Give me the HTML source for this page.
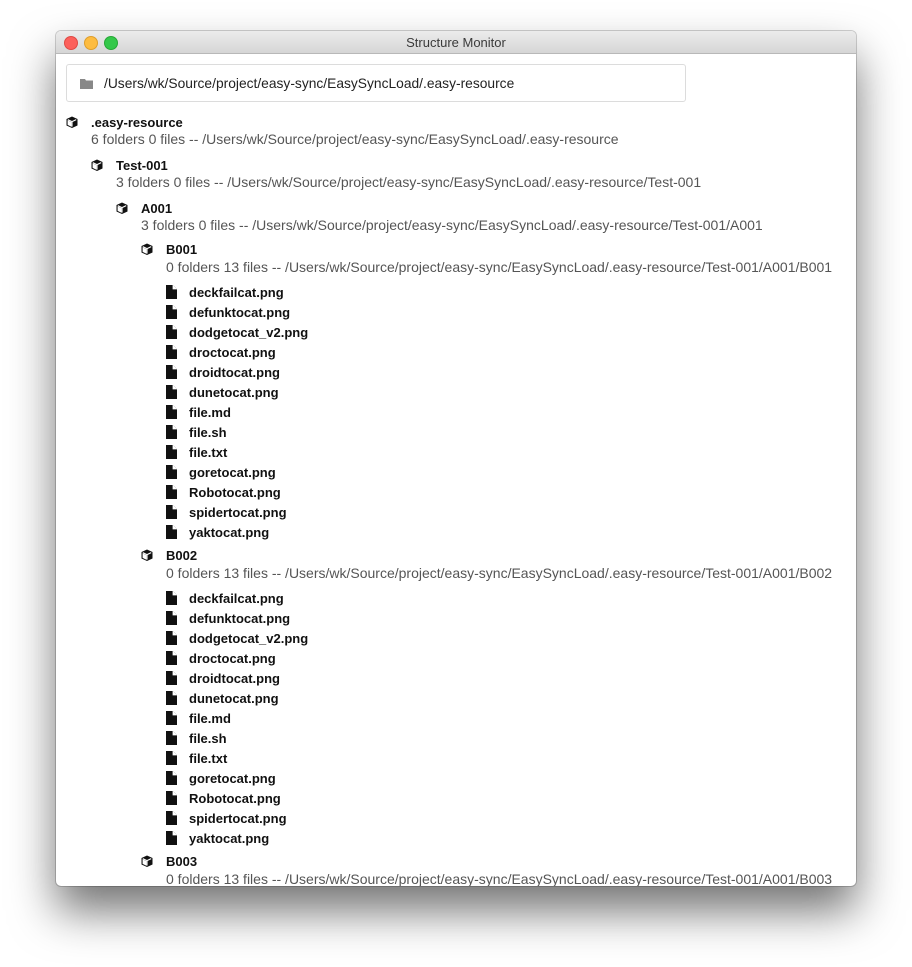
<!DOCTYPE html>
<html><head><meta charset="utf-8"><style>
body{margin:0;width:912px;height:967px;background:#fff;position:relative;overflow:hidden;font-family:"Liberation Sans",sans-serif;}
.win{position:absolute;left:56px;top:31px;width:800px;height:855px;background:#fff;border-radius:5px;box-shadow:0 25px 45px rgba(0,0,0,.55),0 0 0 1px rgba(0,0,0,.18);overflow:hidden}
.tb{height:22px;background:linear-gradient(#ececec,#d6d6d6);border-bottom:1px solid #b8b8b8;text-align:center;font-size:13px;line-height:24px;color:#3a3a3a}
.d{position:absolute;top:5px;width:12px;height:12px;border-radius:50%}
.inp{position:absolute;left:10px;top:33px;width:618px;height:36px;border:1px solid #dcdcdc;border-radius:3px}
.inp span{position:absolute;left:37px;top:11px;font-size:13.8px;color:#222}
.r{position:absolute;white-space:nowrap;font-size:13px;line-height:16px}
div.r{margin-top:1px}
.h{font-weight:bold;color:#111}
.s{color:#555;font-size:14px}
.f{font-weight:bold;color:#111}
</style></head><body>
<div class="win">
<div class="tb">Structure Monitor</div>
<div class="d" style="left:8px;background:#fc605b;border:0.5px solid #de4a44"></div>
<div class="d" style="left:28px;background:#fdbc40;border:0.5px solid #de9e2b"></div>
<div class="d" style="left:48px;background:#34c84a;border:0.5px solid #27a736"></div>
<div class="inp"><svg style="position:absolute;left:13px;top:13px" width="13" height="11" viewBox="0 0 13 11"><path d="M0 1h5l1 1.5h7V11H0z" fill="#888"/></svg><span>/Users/wk/Source/project/easy-sync/EasySyncLoad/.easy-resource</span></div>
</div>
<svg width="0" height="0" style="position:absolute"><defs>
<g id="cube"><path d="M6 0.5L11.5 3v6.5L6 12 0.5 9.5V3z" fill="#111"/><path d="M1.8 3.6L6 5.6l4.2-2M6 5.6v5" stroke="#fff" stroke-width="1.1" fill="none"/><path d="M1.6 4.3L5.4 6.1v4.6L1.6 8.9z" fill="#fff"/></g>
<g id="file"><path d="M0 0h7l4 4v10H0z" fill="#111"/><path d="M7 0v4h4" fill="#fff" stroke="#fff" stroke-width="0.8"/></g>
</defs></svg>

<svg class="r" style="left:66px;top:116px" width="12" height="12"><use href="#cube"/></svg>
<div class="r h" style="left:91px;top:114px">.easy-resource</div>
<div class="r s" style="left:91px;top:130px">6 folders 0 files -- /Users/wk/Source/project/easy-sync/EasySyncLoad/.easy-resource</div>

<svg class="r" style="left:91px;top:159px" width="12" height="12"><use href="#cube"/></svg>
<div class="r h" style="left:116px;top:157px">Test-001</div>
<div class="r s" style="left:116px;top:173px">3 folders 0 files -- /Users/wk/Source/project/easy-sync/EasySyncLoad/.easy-resource/Test-001</div>

<svg class="r" style="left:116px;top:202px" width="12" height="12"><use href="#cube"/></svg>
<div class="r h" style="left:141px;top:200px">A001</div>
<div class="r s" style="left:141px;top:216px">3 folders 0 files -- /Users/wk/Source/project/easy-sync/EasySyncLoad/.easy-resource/Test-001/A001</div>

<svg class="r" style="left:141px;top:243px" width="12" height="12"><use href="#cube"/></svg>
<div class="r h" style="left:166px;top:241px">B001</div>
<div class="r s" style="left:166px;top:258px">0 folders 13 files -- /Users/wk/Source/project/easy-sync/EasySyncLoad/.easy-resource/Test-001/A001/B001</div>

<svg class="r" style="left:166px;top:285px" width="11" height="14"><use href="#file"/></svg><div class="r f" style="left:189px;top:284px">deckfailcat.png</div>
<svg class="r" style="left:166px;top:305px" width="11" height="14"><use href="#file"/></svg><div class="r f" style="left:189px;top:304px">defunktocat.png</div>
<svg class="r" style="left:166px;top:325px" width="11" height="14"><use href="#file"/></svg><div class="r f" style="left:189px;top:324px">dodgetocat_v2.png</div>
<svg class="r" style="left:166px;top:345px" width="11" height="14"><use href="#file"/></svg><div class="r f" style="left:189px;top:344px">droctocat.png</div>
<svg class="r" style="left:166px;top:365px" width="11" height="14"><use href="#file"/></svg><div class="r f" style="left:189px;top:364px">droidtocat.png</div>
<svg class="r" style="left:166px;top:385px" width="11" height="14"><use href="#file"/></svg><div class="r f" style="left:189px;top:384px">dunetocat.png</div>
<svg class="r" style="left:166px;top:405px" width="11" height="14"><use href="#file"/></svg><div class="r f" style="left:189px;top:404px">file.md</div>
<svg class="r" style="left:166px;top:425px" width="11" height="14"><use href="#file"/></svg><div class="r f" style="left:189px;top:424px">file.sh</div>
<svg class="r" style="left:166px;top:445px" width="11" height="14"><use href="#file"/></svg><div class="r f" style="left:189px;top:444px">file.txt</div>
<svg class="r" style="left:166px;top:465px" width="11" height="14"><use href="#file"/></svg><div class="r f" style="left:189px;top:464px">goretocat.png</div>
<svg class="r" style="left:166px;top:485px" width="11" height="14"><use href="#file"/></svg><div class="r f" style="left:189px;top:484px">Robotocat.png</div>
<svg class="r" style="left:166px;top:505px" width="11" height="14"><use href="#file"/></svg><div class="r f" style="left:189px;top:504px">spidertocat.png</div>
<svg class="r" style="left:166px;top:525px" width="11" height="14"><use href="#file"/></svg><div class="r f" style="left:189px;top:524px">yaktocat.png</div>

<svg class="r" style="left:141px;top:549px" width="12" height="12"><use href="#cube"/></svg>
<div class="r h" style="left:166px;top:547px">B002</div>
<div class="r s" style="left:166px;top:564px">0 folders 13 files -- /Users/wk/Source/project/easy-sync/EasySyncLoad/.easy-resource/Test-001/A001/B002</div>

<svg class="r" style="left:166px;top:591px" width="11" height="14"><use href="#file"/></svg><div class="r f" style="left:189px;top:590px">deckfailcat.png</div>
<svg class="r" style="left:166px;top:611px" width="11" height="14"><use href="#file"/></svg><div class="r f" style="left:189px;top:610px">defunktocat.png</div>
<svg class="r" style="left:166px;top:631px" width="11" height="14"><use href="#file"/></svg><div class="r f" style="left:189px;top:630px">dodgetocat_v2.png</div>
<svg class="r" style="left:166px;top:651px" width="11" height="14"><use href="#file"/></svg><div class="r f" style="left:189px;top:650px">droctocat.png</div>
<svg class="r" style="left:166px;top:671px" width="11" height="14"><use href="#file"/></svg><div class="r f" style="left:189px;top:670px">droidtocat.png</div>
<svg class="r" style="left:166px;top:691px" width="11" height="14"><use href="#file"/></svg><div class="r f" style="left:189px;top:690px">dunetocat.png</div>
<svg class="r" style="left:166px;top:711px" width="11" height="14"><use href="#file"/></svg><div class="r f" style="left:189px;top:710px">file.md</div>
<svg class="r" style="left:166px;top:731px" width="11" height="14"><use href="#file"/></svg><div class="r f" style="left:189px;top:730px">file.sh</div>
<svg class="r" style="left:166px;top:751px" width="11" height="14"><use href="#file"/></svg><div class="r f" style="left:189px;top:750px">file.txt</div>
<svg class="r" style="left:166px;top:771px" width="11" height="14"><use href="#file"/></svg><div class="r f" style="left:189px;top:770px">goretocat.png</div>
<svg class="r" style="left:166px;top:791px" width="11" height="14"><use href="#file"/></svg><div class="r f" style="left:189px;top:790px">Robotocat.png</div>
<svg class="r" style="left:166px;top:811px" width="11" height="14"><use href="#file"/></svg><div class="r f" style="left:189px;top:810px">spidertocat.png</div>
<svg class="r" style="left:166px;top:831px" width="11" height="14"><use href="#file"/></svg><div class="r f" style="left:189px;top:830px">yaktocat.png</div>

<svg class="r" style="left:141px;top:855px" width="12" height="12"><use href="#cube"/></svg>
<div class="r h" style="left:166px;top:853px">B003</div>
<div class="r s" style="left:166px;top:870px;height:15px;overflow:hidden">0 folders 13 files -- /Users/wk/Source/project/easy-sync/EasySyncLoad/.easy-resource/Test-001/A001/B003</div>
</body></html>
